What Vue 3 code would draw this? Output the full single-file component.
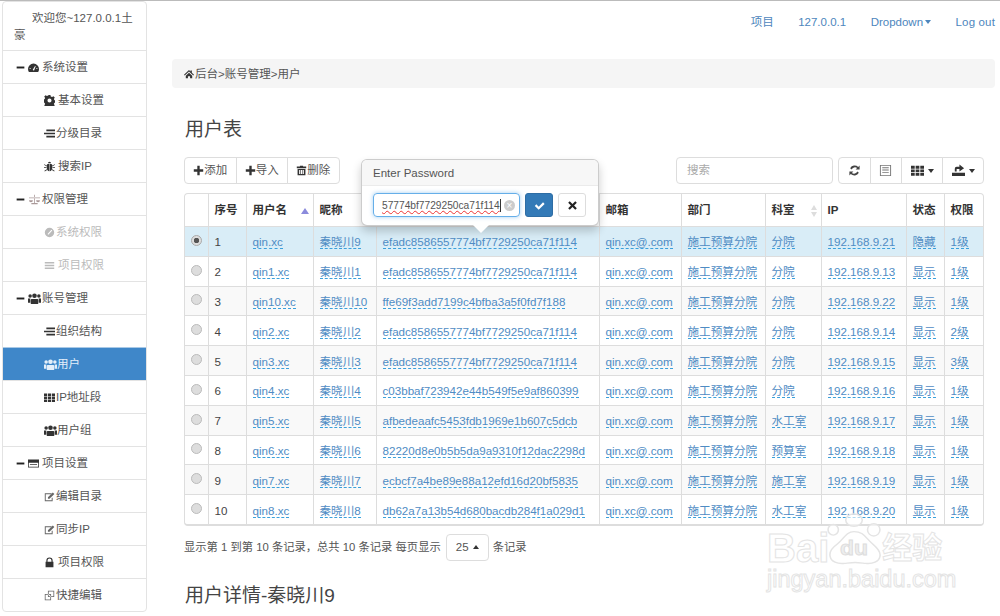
<script setup>
const icons = {
  minus: 'M1 5.500h12v3H1z',
  gauge: 'M7 2a7 7 0 0 0-7 7c0 1.400.400 2.700 1.100 3.800h11.800A7 7 0 0 0 14 9a7 7 0 0 0-7-7z M6 10l3-5 .800.400L7.600 11z M2 8h1.500v1H2z M10.500 8H12v1h-1.500z',
  cog: 'M5.800 0h2.400l.400 2 1.700.700 1.700-1.100 1.700 1.700-1.100 1.700.700 1.700 2 .400v2.400l-2 .400-.700 1.700 1.100 1.700-1.700 1.700-1.700-1.100-1.700.700-.400 2H5.800l-.400-2-1.700-.700-1.700 1.100-1.700-1.700 1.100-1.700-.700-1.700-2-.400V5.800l2-.400.700-1.700-1.100-1.700 1.700-1.700 1.700 1.100 1.700-.700z M7 4.400a2.600 2.600 0 1 0 0 5.200 2.600 2.600 0 0 0 0-5.200z',
  align: 'M3 2h11v2H3z M0 6h14v2H0z M3 10h11v2H3z',
  bug: 'M7 1a2 2 0 0 1 2 2H5a2 2 0 0 1 2-2z M4.500 3.800h2.200V13C5 13 3.500 11.500 3.500 9V5z M7.300 3.800h2.200l1 1.200V9c0 2.500-1.500 4-3.200 4z M.500 4l3 2-.500.800-3-2z M13.500 4l-3 2 .500.800 3-2z M0 8h3v1H0z M11 8h3v1h-3z M.500 12.500l3-2 .500.800-3 2z M13.500 12.500l-3-2-.500.800 3 2z',
  scale: 'M0 4.500h14v1H0z M6.500 1h1v10.500h-1z M3 11.500h8V13H3z M0 8h5a2.500 2.500 0 0 1-5 0z M9 8h5a2.500 2.500 0 0 1-5 0z',
  ban: 'M7 1a6 6 0 1 0 0 12A6 6 0 0 0 7 1z M9.500 3.500l1 1-5 5.500-1-1z',
  menu: 'M1 2.500h12v2H1z M1 6h12v2H1z M1 9.500h12v2H1z',
  users: 'M7 1.500a2.500 2.500 0 1 0 0 5 2.500 2.500 0 0 0 0-5z M3.500 7.500h7l.500 1V13H3V8.500z M2.300 2.500a1.900 1.900 0 1 0 0 3.800 1.900 1.900 0 0 0 0-3.800z M11.700 2.500a1.900 1.900 0 1 0 0 3.800 1.900 1.900 0 0 0 0-3.800z M0 7h2.500v4.500H0z M11.500 7H14v4.500h-2.500z',
  th: 'M0 2h4v3H0z M5 2h4v3H5z M10 2h4v3h-4z M0 5.800h4v3H0z M5 5.800h4v3H5z M10 5.800h4v3h-4z M0 9.600h4v3H0z M5 9.600h4v3H5z M10 9.600h4v3h-4z',
  win: 'M0 2h14v10H0z M1 6h12v5H1z M2.500 7.500h9v1h-9z',
  edit: 'M1 3h8.500v1.200H2.200v7.600h7.600V8.500H11V13H1z M5 8l6.200-6.200 2 2L7 10H5z',
  lock: 'M3 6V4.500a4 4 0 0 1 8 0V6h1v7H2V6z M4.500 6h5V4.500a2.500 2.500 0 0 0-5 0z',
  dup: 'M5 1h8v8H5z M6 2v6h6V2z M1 5h8v8H1z M2 6v6h6V6z',
  home: 'M7 1.500L0 8l1 1 6-5.500L13 9l1-1-3-2.800V2H9v1.400z M2.500 9.500L7 5.300l4.500 4.200V13H8.500V10h-3v3h-3z',
  plus: 'M5.500 1h3v4.500H13v3H8.500V13h-3V8.500H1v-3h4.500z',
  trash: 'M5 1h4v1h4v2H1V2h4z M2 5h10v8H2z M4 6.500v5h1.500v-5z M6.300 6.500v5h1.500v-5z M8.500 6.500v5H10v-5z',
  refresh: 'M2.300 4.500A5.500 5.500 0 0 1 11 3.200L12.500 1.700V6H8.200l1.600-1.600A3.800 3.800 0 0 0 4 6z M11.700 9.500A5.500 5.500 0 0 1 3 10.800L1.500 12.300V8h4.300L4.200 9.600A3.800 3.800 0 0 0 10 8z',
  list: 'M1 1h12v12H1z M2 2v10h10V2z M3.500 3.500h7v1h-7z M3.500 6h7v1h-7z M3.500 8.500h7v1h-7z',
  export: 'M0 9.500h14V13H0z M3 8V5a2 2 0 0 1 2-2h3V.500l5 4-5 3.500V5.500H5V8z',
  ok: 'M1 7.500l2-2 3 3L11.500 3l2 2L6 12.500z',
  remove: 'M3.500 1.500L7 5l3.500-3.500 2 2L9 7l3.500 3.500-2 2L7 9l-3.500 3.500-2-2L5 7 1.500 3.500z'
}

const menu = [
  { t: '系统设置', i: 'gauge', top: true },
  { t: '基本设置', i: 'cog', gap: true },
  { t: '分级目录', i: 'align' },
  { t: '搜索IP', i: 'bug', gap: true },
  { t: '权限管理', i: 'scale', top: true, cls: 'pink' },
  { t: '系统权限', i: 'ban', off: true },
  { t: '项目权限', i: 'menu', off: true, gap: true },
  { t: '账号管理', i: 'users', top: true },
  { t: '组织结构', i: 'align' },
  { t: '用户', i: 'users', on: true },
  { t: 'IP地址段', i: 'th' },
  { t: '用户组', i: 'users' },
  { t: '项目设置', i: 'win', top: true },
  { t: '编辑目录', i: 'edit', cls: 'soft' },
  { t: '同步IP', i: 'edit', cls: 'soft' },
  { t: '项目权限', i: 'lock', gap: true },
  { t: '快捷编辑', i: 'dup', cls: 'soft' }
]

const md = 'efadc8586557774bf7729250ca71f114'
const rows = [
  ['qin.xc', '秦晓川9', md, '分院', '21', '隐藏', '1级'],
  ['qin1.xc', '秦晓川1', md, '分院', '13', '显示', '1级'],
  ['qin10.xc', '秦晓川10', 'ffe69f3add7199c4bfba3a5f0fd7f188', '分院', '22', '显示', '1级'],
  ['qin2.xc', '秦晓川2', md, '分院', '14', '显示', '2级'],
  ['qin3.xc', '秦晓川3', md, '分院', '15', '显示', '3级'],
  ['qin4.xc', '秦晓川4', 'c03bbaf723942e44b549f5e9af860399', '分院', '16', '显示', '1级'],
  ['qin5.xc', '秦晓川5', 'afbedeaafc5453fdb1969e1b607c5dcb', '水工室', '17', '显示', '1级'],
  ['qin6.xc', '秦晓川6', '82220d8e0b5b5da9a9310f12dac2298d', '预算室', '18', '显示', '1级'],
  ['qin7.xc', '秦晓川7', 'ecbcf7a4be89e88a12efd16d20bf5835', '施工室', '19', '显示', '1级'],
  ['qin8.xc', '秦晓川8', 'db62a7a13b54d680bacdb284f1a029d1', '水工室', '20', '显示', '1级']
]
const cols = ['c1', 'c2', 'c3', 'c4', 'c5', 'c6', 'c7', 'c8', 'c9', 'c10', 'c11']
</script>

<template>
  <div class="page">
    <aside class="side">
      <div class="hello">欢迎您~127.0.0.1土豪</div>
      <div
        v-for="m in menu"
        :key="m.t + m.i"
        class="item"
        :class="[{ top: m.top, off: m.off, on: m.on }, m.cls]"
      >
        <svg v-if="m.top" class="ic dash" viewBox="0 0 14 14"><path :d="icons.minus" /></svg>
        <svg class="ic" :class="m.i" viewBox="0 0 14 14"><path :d="icons[m.i]" fill-rule="evenodd" /></svg>
        <span :class="{ gap: m.gap }">{{ m.t }}</span>
      </div>
    </aside>

    <main class="main">
      <nav class="nav">
        <a>项目</a>
        <a>127.0.0.1</a>
        <a>Dropdown<i class="caret"></i></a>
        <a class="out">Log out</a>
      </nav>

      <div class="crumb">
        <svg class="ic" viewBox="0 0 14 14"><path :d="icons.home" /></svg>
        <span>后台&gt;账号管理&gt;用户</span>
      </div>

      <section class="body">
        <h3 class="title">用户表</h3>

        <div class="bar">
          <div class="group">
            <button class="btn act"><svg class="ic" viewBox="0 0 14 14"><path :d="icons.plus" /></svg>添加</button>
            <button class="btn act"><svg class="ic" viewBox="0 0 14 14"><path :d="icons.plus" /></svg>导入</button>
            <button class="btn act"><svg class="ic" viewBox="0 0 14 14"><path :d="icons.trash" fill-rule="evenodd" /></svg>删除</button>
          </div>
          <div class="search">搜索</div>
          <div class="group tools">
            <button class="btn t1"><svg class="ic" viewBox="0 0 14 14"><path :d="icons.refresh" /></svg></button>
            <button class="btn t1 grey"><svg class="ic" viewBox="0 0 14 14"><path :d="icons.list" fill-rule="evenodd" /></svg></button>
            <button class="btn t2"><svg class="ic" viewBox="0 0 14 14"><path :d="icons.th" /></svg><i class="caret dark"></i></button>
            <button class="btn t2"><svg class="ic" viewBox="0 0 14 14"><path :d="icons.export" /></svg><i class="caret dark"></i></button>
          </div>

          <div class="pop">
            <div class="pop-head">Enter Password</div>
            <div class="pop-body">
              <div class="pw">
                <span class="pw-text">57774bf7729250ca71f114</span><i class="cursor"></i>
                <span class="clear">×</span>
              </div>
              <button class="btn okb"><svg class="ic" viewBox="0 0 14 14"><path :d="icons.ok" /></svg></button>
              <button class="btn nob"><svg class="ic" viewBox="0 0 14 14"><path :d="icons.remove" /></svg></button>
            </div>
            <i class="arrow"></i>
          </div>
        </div>

        <div class="wrap">
          <table class="table">
            <colgroup>
              <col v-for="c in cols" :key="c" :class="c" />
            </colgroup>
            <thead>
              <tr>
                <th></th>
                <th>序号</th>
                <th><div class="sort">用户名<i class="up"></i></div></th>
                <th>昵称</th>
                <th></th>
                <th>邮箱</th>
                <th>部门</th>
                <th><div class="sort">科室<span class="both"><i></i><i></i></span></div></th>
                <th>IP</th>
                <th>状态</th>
                <th>权限</th>
              </tr>
            </thead>
            <tbody>
              <tr v-for="(r, i) in rows" :key="r[0]" :class="{ sel: i === 0 }">
                <td class="rc"><span class="radio" :class="{ chk: i === 0 }"></span></td>
                <td>{{ i + 1 }}</td>
                <td><a>{{ r[0] }}</a></td>
                <td><a>{{ r[1] }}</a></td>
                <td><a>{{ r[2] }}</a></td>
                <td><a>qin.xc@.com</a></td>
                <td><a>施工预算分院</a></td>
                <td><a>{{ r[3] }}</a></td>
                <td><a>192.168.9.{{ r[4] }}</a></td>
                <td><a>{{ r[5] }}</a></td>
                <td><a>{{ r[6] }}</a></td>
              </tr>
            </tbody>
          </table>
        </div>

        <div class="pager">
          <span>显示第 1 到第 10 条记录，总共 10 条记录 每页显示</span>
          <button class="btn size">25<i class="caret dark flip"></i></button>
          <span>条记录</span>
        </div>

        <h3 class="title sub">用户详情-秦晓川9</h3>
      </section>
    </main>

    <div class="mark" aria-hidden="true">
      <div class="mark-top">
        <span class="bai">Bai</span>
        <svg class="paw" width="54" height="53" viewBox="0 0 52 60" preserveAspectRatio="none">
          <ellipse cx="26" cy="8" rx="8" ry="7" />
          <ellipse cx="6" cy="19" rx="5" ry="6" />
          <ellipse cx="45" cy="19" rx="6" ry="7" />
          <path d="M26 21c-8 0-10 9-16 14-6 5-8 9-7 14 1 6 7 9 14 8 4-.5 7-1 10-1s6 .5 10 1c7 1 13-2 14-8 1-5-2-9-7-14-6-5-8-14-18-14z" />
          <text x="26" y="48" text-anchor="middle">du</text>
        </svg>
        <span class="cn">经验</span>
      </div>
      <div class="mark-url">jingyan.baidu.com</div>
    </div>
  </div>
</template>

<style>
html, body { margin: 0; background: #fff; overflow: hidden; }
</style>

<style scoped>
.page {
  position: relative;
  display: flex;
  align-items: flex-start;
  width: 1000px;
  height: 615px;
  overflow: hidden;
  border-top: 1px solid #bbb;
  font: 11.5px/17px "Liberation Sans", "Noto Sans CJK SC", sans-serif;
  color: #444;
  background: #fff;
}
.ic { width: 12px; height: 12px; fill: currentColor; flex: none; }

/* sidebar */
.side {
  width: 145px;
  margin-left: 2px;
  border: 1px solid #e3e3e3;
  border-radius: 4px;
  box-sizing: border-box;
  flex: none;
  color: #555;
}
.hello {
  box-sizing: border-box;
  height: 48px;
  padding: 8px 5px 0 11px;
  text-indent: 18px;
  overflow: hidden;
}
.item {
  display: flex;
  align-items: center;
  box-sizing: border-box;
  height: 33px;
  padding-left: 41px;
  border-top: 1px solid #e3e3e3;
}
.item .ic { width: 11px; height: 11px; margin-right: 1px; color: #333; }
.item .gap { margin-left: 2px; }
.item.top { padding-left: 13px; }
.item.top .ic { margin-right: 3px; }
.item .dash { width: 9px; height: 11px; color: #222; }
.item .users { width: 13px; height: 13px; margin-right: 0; }
.item.top .users { margin-right: 1px; }
.item.pink .ic:not(.dash) { width: 13px; margin-right: 1px; color: #a99; }
.item.soft .ic { color: #666; }
.item.off, .item.off .ic { color: #bbb; }
.item.on {
  background: #3f87c9;
  border-color: #a9c9e6;
  color: #e4effa;
}
.item.on .ic { color: #e4effa; }

/* main */
.main { flex: 1; min-width: 0; padding: 0 5px 0 25px; }
.nav {
  display: flex;
  justify-content: flex-end;
  align-items: center;
  gap: 24.500px;
  height: 42px;
  color: #4d86bd;
}
.out { letter-spacing: .15px; }
.caret {
  display: inline-block;
  margin-left: 2px;
  vertical-align: middle;
  border-top: 4px solid #4d86bd;
  border-left: 3.500px solid transparent;
  border-right: 3.500px solid transparent;
}
.caret.dark { border-top-color: #333; margin-left: 4px; }
.caret.flip { border-top: 0; border-bottom: 4px solid #333; }
.crumb {
  display: flex;
  align-items: center;
  box-sizing: border-box;
  height: 29px;
  margin-top: 16px;
  padding: 1px 0 0 12px;
  background: #f5f5f5;
  border-radius: 4px;
  color: #555;
}
.crumb .ic { width: 10px; height: 10px; color: #333; margin-right: 1px; }
.body { padding: 0 11px 0 12px; }
.title {
  margin: 0;
  padding-left: 1px;
  font-size: 19px;
  font-weight: 400;
  line-height: 24px;
  color: #444;
}
.body > .title:first-child { margin-top: 30px; }
.sub { margin-top: 23px; }

/* toolbar */
.bar {
  position: relative;
  display: flex;
  align-items: flex-start;
  margin-top: 15px;
  height: 27px;
}
.group { display: flex; }
.btn {
  display: inline-flex;
  align-items: center;
  justify-content: center;
  box-sizing: border-box;
  height: 27px;
  padding: 0;
  margin: 0;
  border: 1px solid #ddd;
  background: #fff;
  font: inherit;
  color: #555;
}
.group .btn + .btn { margin-left: -1px; }
.group .btn:first-child { border-radius: 4px 0 0 4px; }
.group .btn:last-child { border-radius: 0 4px 4px 0; }
.act { width: 52.500px; }
.act .ic { width: 11px; height: 11px; color: #333; }
.search {
  box-sizing: border-box;
  width: 157px;
  height: 27px;
  margin-left: auto;
  padding: 4px 10px;
  border: 1px solid #ddd;
  border-radius: 4px;
  color: #aaa;
}
.tools { margin-left: 5px; }
.t1 { width: 32.500px; color: #444; }
.t1 .ic, .t2 .ic { width: 13px; height: 13px; }
.grey { color: #777; }
.t2 { width: 42px; color: #333; }

/* popover */
.pop {
  position: absolute;
  left: 177px;
  top: 2px;
  z-index: 3;
  box-sizing: border-box;
  width: 238px;
  height: 67px;
  background: #fff;
  border: 1px solid rgba(0, 0, 0, .2);
  border-radius: 6px;
  box-shadow: 0 5px 10px rgba(0, 0, 0, .2);
}
.pop-head {
  box-sizing: border-box;
  height: 26px;
  padding: 5px 11px;
  background: #f7f7f7;
  border-bottom: 1px solid #ebebeb;
  border-radius: 5px 5px 0 0;
  color: #555;
}
.pop-body {
  display: flex;
  align-items: center;
  padding: 7px 0 0 11px;
}
.pw {
  position: relative;
  display: flex;
  align-items: center;
  box-sizing: border-box;
  width: 147px;
  height: 24px;
  padding-left: 8px;
  border: 1px solid #66afe9;
  border-radius: 4px;
  box-shadow: 0 0 4px rgba(102, 175, 233, .6);
  color: #555;
  font-size: 10.200px;
  white-space: nowrap;
}
.pw-text { text-decoration: underline wavy #e33 1px; }
.cursor { width: 1px; height: 13px; background: #333; }
.clear {
  position: absolute;
  right: 4px;
  top: 6px;
  width: 11px;
  height: 11px;
  border-radius: 50%;
  background: #ccc;
  color: #fff;
  font-size: 10px;
  line-height: 11px;
  text-align: center;
}
.okb, .nob { width: 28px; height: 24px; border-radius: 3px; }
.okb { margin-left: 5px; background: #337ab7; border-color: #2e6da4; color: #fff; }
.nob { margin-left: 5px; color: #222; }
.okb .ic, .nob .ic { width: 11px; height: 11px; }
.arrow {
  position: absolute;
  left: 111px;
  bottom: -8px;
  border-top: 8px solid #fff;
  border-left: 8px solid transparent;
  border-right: 8px solid transparent;
}

/* table */
.wrap {
  margin-top: 9px;
  border: 1px solid #ddd;
  border-bottom-width: 2px;
  border-radius: 4px;
  overflow: hidden;
}
.table {
  width: 798px;
  table-layout: fixed;
  border-collapse: collapse;
}
.c1 { width: 23px; }
.c2 { width: 38px; }
.c3 { width: 67px; }
.c4 { width: 63px; }
.c5 { width: 223px; }
.c6 { width: 82px; }
.c7 { width: 84px; }
.c8 { width: 56px; }
.c9 { width: 85px; }
.c10 { width: 38px; }
.c11 { width: 39px; }
th, td {
  padding: 1px 0 0 6px;
  border-left: 1px solid #ddd;
  text-align: left;
  white-space: nowrap;
}
th:first-child, td:first-child { border-left: 0; }
th {
  height: 31px;
  font-weight: 700;
  color: #333;
}
td {
  height: 27.800px;
  border-top: 1px solid #ddd;
  color: #444;
  font-size: 11.600px;
}
tbody tr:nth-child(odd) { background: #f9f9f9; }
tbody tr.sel { background: #d9edf7; }
td a {
  color: #4f8cc4;
  border-bottom: 1px dashed #3aa0dc;
}
.radio {
  display: block;
  box-sizing: border-box;
  width: 11px;
  height: 11px;
  margin-top: -3px;
  border-radius: 50%;
  border: 1px solid #bbb;
  background: #ddd;
}
.radio.chk { background: radial-gradient(circle, #555 0 2.500px, #ddd 3px); border-color: #aaa; }
.sort { display: flex; align-items: center; justify-content: space-between; padding-right: 4px; }
.up {
  border-bottom: 6px solid #8b8bdc;
  border-left: 4px solid transparent;
  border-right: 4px solid transparent;
}
.both { display: flex; flex-direction: column; gap: 2px; }
.both i {
  border-bottom: 5px solid #ddd;
  border-left: 3.500px solid transparent;
  border-right: 3.500px solid transparent;
}
.both i + i { border-bottom: 0; border-top: 5px solid #ddd; }

/* pager */
.pager {
  display: flex;
  align-items: center;
  gap: 4px;
  margin-top: 8px;
  color: #555;
  font-size: 11.300px;
}
.size { width: 43px; border-radius: 4px; margin-left: 1px; font-size: 11.500px; }

/* watermark */
.mark {
  position: absolute;
  left: 767px;
  top: 512px;
  width: 190px;
  pointer-events: none;
  font-family: "Liberation Sans", "Noto Sans CJK SC", sans-serif;
  color: rgba(255, 255, 255, .7);
  -webkit-text-stroke: 1px #e4e4e4;
}
.mark-top {
  display: flex;
  align-items: flex-end;
  font-size: 40px;
  font-weight: 700;
  line-height: 36px;
}
.paw { flex: none; margin: 0 1px 0 -2px; }
.paw ellipse, .paw path { fill: rgba(255, 255, 255, .6); stroke: #e4e4e4; stroke-width: 1.500; }
.paw text { font-size: 22px; fill: #eee; stroke: #ddd; stroke-width: 1; }
.cn { font-size: 30px; }
.mark-url { margin-top: 1px; font-size: 23.500px; line-height: 24px; font-weight: 400; }
</style>
